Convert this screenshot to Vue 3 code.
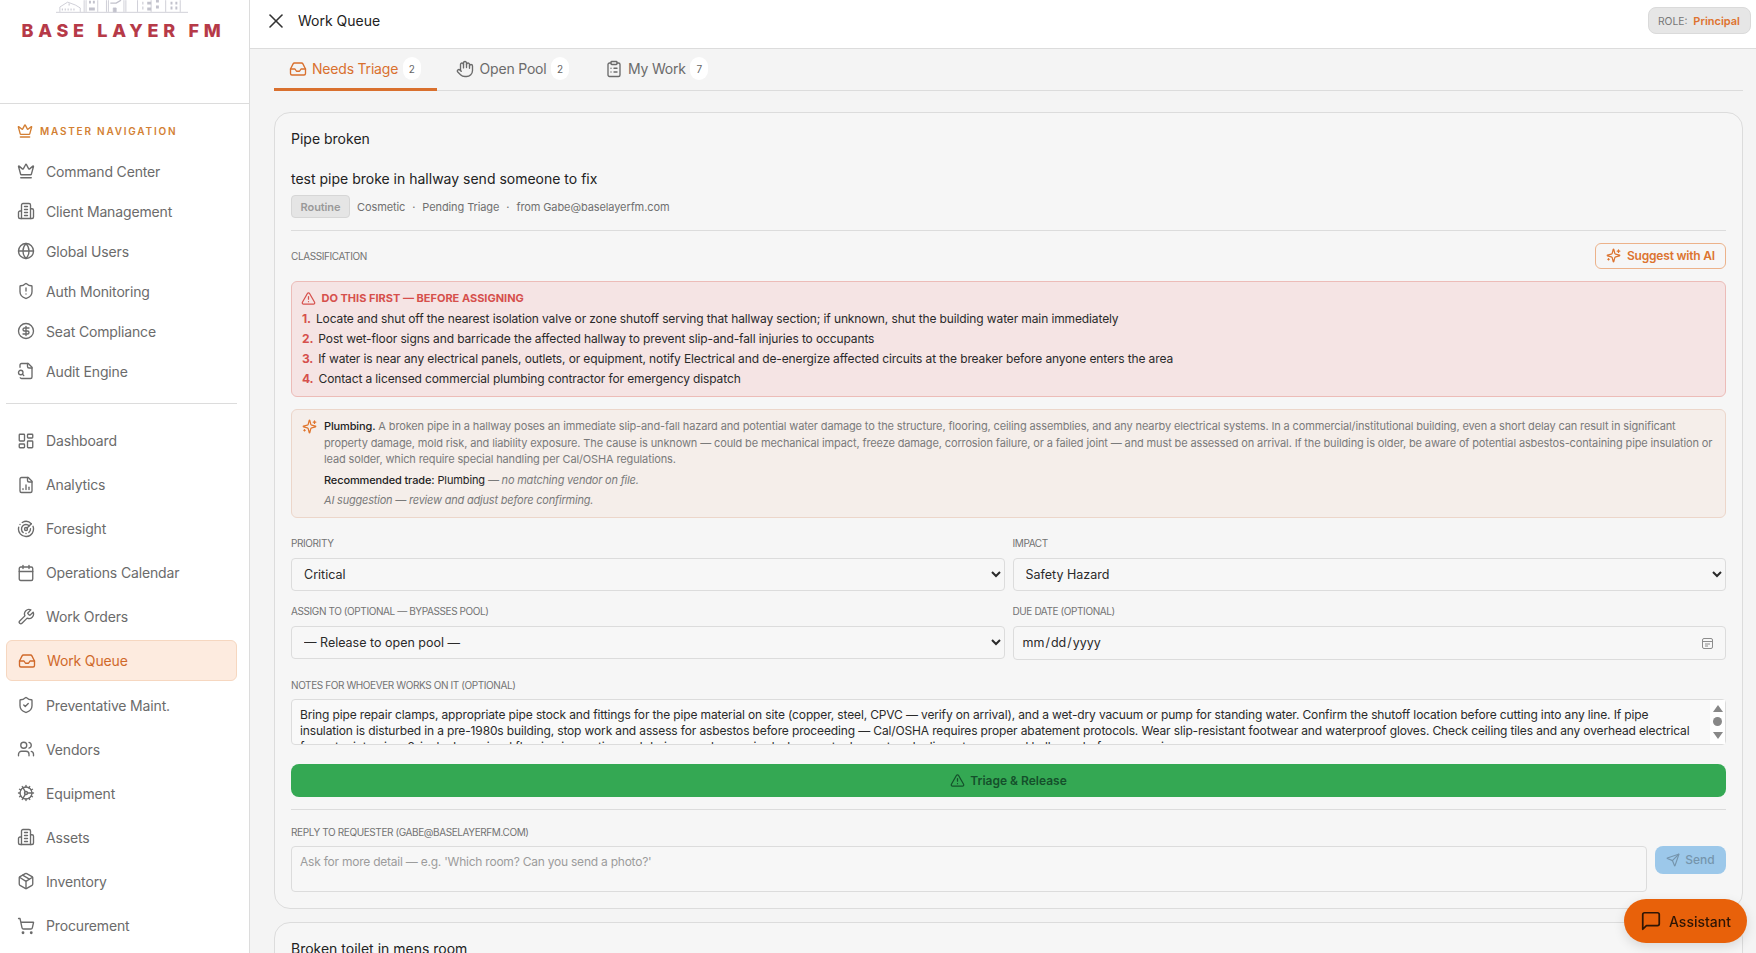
<script setup>
import { h, ref } from 'vue'

const c = (x, y, r) => `M${x - r} ${y}a${r} ${r} 0 1 0 ${2 * r} 0a${r} ${r} 0 1 0 ${-2 * r} 0`
const rr = (x, y, w, hh, r) =>
  `M${x + r} ${y}h${w - 2 * r}a${r} ${r} 0 0 1 ${r} ${r}v${hh - 2 * r}a${r} ${r} 0 0 1 ${-r} ${r}h${-(w - 2 * r)}a${r} ${r} 0 0 1 ${-r} ${-r}v${-(hh - 2 * r)}a${r} ${r} 0 0 1 ${r} ${-r}z`

const shield = 'M20 13c0 5-3.5 7.5-7.66 8.95a1 1 0 0 1-.67-.01C7.5 20.5 4 18 4 13V6a1 1 0 0 1 1-1c2 0 4.5-1.2 6.24-2.72a1.17 1.17 0 0 1 1.52 0C14.51 3.81 17 5 19 5a1 1 0 0 1 1 1z'
const building = ['M6 22V4a2 2 0 0 1 2-2h8a2 2 0 0 1 2 2v18Z', 'M6 12H4a2 2 0 0 0-2 2v6a2 2 0 0 0 2 2h2', 'M18 9h2a2 2 0 0 1 2 2v9a2 2 0 0 1-2 2h-2', 'M10 6h4', 'M10 10h4', 'M10 14h4', 'M10 18h4']
const icons = {
  crown: ['M11.562 3.266a.5.5 0 0 1 .876 0L15.39 8.87a1 1 0 0 0 1.516.294L21.183 5.5a.5.5 0 0 1 .798.519l-2.834 10.246a1 1 0 0 1-.956.734H5.81a1 1 0 0 1-.957-.734L2.02 6.02a.5.5 0 0 1 .798-.519l4.276 3.664a1 1 0 0 0 1.516-.294z', 'M5 21h14'],
  building,
  globe: [c(12, 12, 10), 'M12 2a14.5 14.5 0 0 0 0 20 14.5 14.5 0 0 0 0-20', 'M2 12h20'],
  shieldAlert: [shield, 'M12 8v4', 'M12 16h.01'],
  dollar: [c(12, 12, 10), 'M16 8h-6a2 2 0 1 0 0 4h4a2 2 0 1 1 0 4H8', 'M12 18V6'],
  fileSearch: ['M14 2v4a2 2 0 0 0 2 2h4', 'M4.268 21a2 2 0 0 0 1.727 1H18a2 2 0 0 0 2-2V7l-5-5H6a2 2 0 0 0-2 2v3', 'm9 18-1.5-1.5', c(5, 14, 3)],
  dashboard: [rr(3, 3, 7, 9, 1), rr(14, 3, 7, 5, 1), rr(14, 12, 7, 9, 1), rr(3, 16, 7, 5, 1)],
  fileChart: ['M15 2H6a2 2 0 0 0-2 2v16a2 2 0 0 0 2 2h12a2 2 0 0 0 2-2V7Z', 'M14 2v4a2 2 0 0 0 2 2h4', 'M8 18v-1', 'M12 18v-6', 'M16 18v-3'],
  radar: ['M19.07 4.93A10 10 0 0 0 6.99 3.34', 'M4 6h.01', 'M2.29 9.62A10 10 0 1 0 21.31 8.35', 'M16.24 7.76A6 6 0 1 0 8.23 16.67', 'M12 18h.01', 'M17.99 11.66A6 6 0 0 1 15.77 16.67', c(12, 12, 2), 'm13.41 10.59 5.66-5.66'],
  calendar: ['M8 2v4', 'M16 2v4', rr(3, 4, 18, 18, 2), 'M3 10h18'],
  wrench: ['M14.7 6.3a1 1 0 0 0 0 1.4l1.6 1.6a1 1 0 0 0 1.4 0l3.77-3.77a6 6 0 0 1-7.94 7.94l-6.91 6.91a2.12 2.12 0 0 1-3-3l6.91-6.91a6 6 0 0 1 7.94-7.94l-3.76 3.76z'],
  inbox: ['M22 12h-6l-2 3h-4l-2-3H2', 'M5.45 5.11 2 12v6a2 2 0 0 0 2 2h16a2 2 0 0 0 2-2v-6l-3.45-6.89A2 2 0 0 0 16.76 4H7.24a2 2 0 0 0-1.79 1.11z'],
  shieldCheck: [shield, 'm9 12 2 2 4-4'],
  users: ['M16 21v-2a4 4 0 0 0-4-4H6a4 4 0 0 0-4 4v2', c(9, 7, 4), 'M22 21v-2a4 4 0 0 0-3-3.87', 'M16 3.13a4 4 0 0 1 0 7.75'],
  cog: ['M12 20a8 8 0 1 0 0-16 8 8 0 0 0 0 16Z', 'M12 14a2 2 0 1 0 0-4 2 2 0 0 0 0 4Z', 'M12 2v2', 'M12 22v-2', 'm17 20.66-1-1.73', 'M11 10.27 7 3.34', 'm20.66 17-1.73-1', 'm3.34 7 1.73 1', 'M14 12h8', 'M2 12h2', 'm20.66 7-1.73 1', 'm3.34 17 1.73-1', 'm17 3.34-1 1.73', 'm11 13.73-4 6.93'],
  package: ['M11 21.73a2 2 0 0 0 2 0l7-4A2 2 0 0 0 21 16V8a2 2 0 0 0-1-1.73l-7-4a2 2 0 0 0-2 0l-7 4A2 2 0 0 0 3 8v8a2 2 0 0 0 1 1.73z', 'M12 22V12', 'm3.3 7 7.703 4.734a2 2 0 0 0 1.994 0L20.7 7', 'm7.5 4.27 9 5.15'],
  cart: [c(8, 21, 1), c(19, 21, 1), 'M2.05 2.05h2l2.66 12.42a2 2 0 0 0 2 1.58h9.78a2 2 0 0 0 1.95-1.57l1.65-7.43H5.12'],
  hand: ['M18 11V6a2 2 0 0 0-2-2a2 2 0 0 0-2 2', 'M14 10V4a2 2 0 0 0-2-2a2 2 0 0 0-2 2v2', 'M10 10.5V6a2 2 0 0 0-2-2a2 2 0 0 0-2 2v8', 'M18 8a2 2 0 1 1 4 0v6a8 8 0 0 1-8 8h-2c-2.8 0-4.5-.86-5.99-2.34l-3.6-3.6a2 2 0 0 1 2.83-2.82L7 15'],
  clipboard: [rr(8, 2, 8, 4, 1), 'M16 4h2a2 2 0 0 1 2 2v14a2 2 0 0 1-2 2H6a2 2 0 0 1-2-2V6a2 2 0 0 1 2-2h2', 'M12 11h4', 'M12 16h4', 'M8 11h.01', 'M8 16h.01'],
  alert: ['m21.73 18-8-14a2 2 0 0 0-3.48 0l-8 14A2 2 0 0 0 4 21h16a2 2 0 0 0 1.73-3', 'M12 9v4', 'M12 17h.01'],
  sparkles: ['M9.937 15.5A2 2 0 0 0 8.5 14.063l-6.135-1.582a.5.5 0 0 1 0-.962L8.5 9.936A2 2 0 0 0 9.937 8.5l1.582-6.135a.5.5 0 0 1 .963 0L14.063 8.5A2 2 0 0 0 15.5 9.937l6.135 1.581a.5.5 0 0 1 0 .964L15.5 14.063a2 2 0 0 0-1.437 1.437l-1.582 6.135a.5.5 0 0 1-.963 0z', 'M20 3v4', 'M22 5h-4', 'M4 17v2', 'M5 18H3'],
  send: ['M14.536 21.686a.5.5 0 0 0 .937-.024l6.5-19a.496.496 0 0 0-.635-.635l-19 6.5a.5.5 0 0 0-.024.937l7.93 3.18a2 2 0 0 1 1.112 1.11z', 'm21.854 2.147-10.94 10.939'],
  message: ['M21 15a2 2 0 0 1-2 2H7l-4 4V5a2 2 0 0 1 2-2h14a2 2 0 0 1 2 2z'],
  x: ['M18 6 6 18', 'm6 6 12 12']
}

const Icon = (props) =>
  h('svg', {
    width: props.size || 16, height: props.size || 16, viewBox: '0 0 24 24', fill: 'none',
    stroke: 'currentColor', 'stroke-width': props.sw || 2, 'stroke-linecap': 'round', 'stroke-linejoin': 'round',
    style: 'flex:none;display:block'
  }, (icons[props.name] || []).map((d) => h('path', { d })))
Icon.props = ['name', 'size', 'sw']

const masterNav = [
  ['crown', 'Command Center'], ['building', 'Client Management'], ['globe', 'Global Users'],
  ['shieldAlert', 'Auth Monitoring'], ['dollar', 'Seat Compliance'], ['fileSearch', 'Audit Engine']
].map(([icon, label]) => ({ icon, label }))

const mainNav = [
  ['dashboard', 'Dashboard'], ['fileChart', 'Analytics'], ['radar', 'Foresight'], ['calendar', 'Operations Calendar'],
  ['wrench', 'Work Orders'], ['inbox', 'Work Queue', true], ['shieldCheck', 'Preventative Maint.'], ['users', 'Vendors'],
  ['cog', 'Equipment'], ['building', 'Assets'], ['package', 'Inventory'], ['cart', 'Procurement']
].map(([icon, label, active]) => ({ icon, label, active }))

const tabs = [
  { icon: 'inbox', label: 'Needs Triage', count: 2, active: true },
  { icon: 'hand', label: 'Open Pool', count: 2 },
  { icon: 'clipboard', label: 'My Work', count: 7 }
]

const steps = [
  'Locate and shut off the nearest isolation valve or zone shutoff serving that hallway section; if unknown, shut the building water main immediately',
  'Post wet-floor signs and barricade the affected hallway to prevent slip-and-fall injuries to occupants',
  'If water is near any electrical panels, outlets, or equipment, notify Electrical and de-energize affected circuits at the breaker before anyone enters the area',
  'Contact a licensed commercial plumbing contractor for emergency dispatch'
]

const notes = ref('Bring pipe repair clamps, appropriate pipe stock and fittings for the pipe material on site (copper, steel, CPVC — verify on arrival), and a wet-dry vacuum or pump for standing water. Confirm the shutoff location before cutting into any line. If pipe insulation is disturbed in a pre-1980s building, stop work and assess for asbestos before proceeding — Cal/OSHA requires proper abatement protocols. Wear slip-resistant footwear and waterproof gloves. Check ceiling tiles and any overhead electrical for water intrusion; 2-inch-deep visual flooring inspection and drying may be required where water has entered adjacent rooms and hallways before reopening.')
</script>

<template>
  <div class="app">
    <aside class="sidebar">
      <div class="brand">
        <svg class="skyline" width="132" height="13" viewBox="0 0 136 13" fill="none" stroke="#c2c2cc" stroke-width="0.8">
          <path d="M0 12.5h136" />
          <path d="M4 12V7l8-5 8 3 5 3v4" />
          <path d="M6 9.5h1M9 9.5h1M12 9.5h1M15 9.5h1M18 9.5h1" stroke-width="2" />
          <path d="M13 4.5h1" stroke-width="2" />
          <path d="M29 12V0M31 12V0M43 12V0" />
          <path d="M34 2h2M38 2h2M34 9h6" stroke-width="3" />
          <path d="M52 12V0M54 12V0M70 12V0M72 12V0" />
          <path d="M56 3h6l5-3" stroke-width="1.4" />
          <path d="M59 8h3v4h-3z" fill="#c2c2cc" />
          <path d="M84 12V0M98 12V0M113 12V0M128 12V0" />
          <path d="M89 3h1M89 8h1M94 9h4M94 3h4M103 1h3M103 7h3M118 3h2M123 3h2M118 8h2M123 8h2" stroke-width="3" />
        </svg>
        <div class="brand-name">BASE LAYER FM</div>
      </div>
      <nav class="nav">
        <div class="nav-head"><Icon name="crown" :size="16" />MASTER NAVIGATION</div>
        <a v-for="item in masterNav" :key="item.label" class="nav-item master">
          <Icon :name="item.icon" :size="18" :sw="1.8" />{{ item.label }}
        </a>
        <hr class="nav-rule" />
        <a v-for="item in mainNav" :key="item.label" class="nav-item" :class="{ active: item.active }">
          <Icon :name="item.icon" :size="18" :sw="1.8" />{{ item.label }}
        </a>
      </nav>
    </aside>

    <div class="main">
      <header class="topbar">
        <div class="top-left">
          <Icon name="x" :size="24" :sw="1.6" />
          <span class="top-title">Work Queue</span>
        </div>
        <div class="role"><span>ROLE:</span><b>Principal</b></div>
      </header>

      <div class="content">
        <div class="tabs">
          <button v-for="t in tabs" :key="t.label" class="tab" :class="{ active: t.active }">
            <Icon :name="t.icon" :size="18" :sw="1.8" />
            <span>{{ t.label }}</span>
            <span class="count">{{ t.count }}</span>
          </button>
        </div>

        <section class="card">
          <h3 class="card-title">Pipe broken</h3>
          <p class="desc">test pipe broke in hallway send someone to fix</p>
          <div class="meta">
            <span class="badge">Routine</span>
            <span>Cosmetic</span><span class="dot">·</span><span>Pending Triage</span><span class="dot">·</span><span>from Gabe@baselayerfm.com</span>
          </div>
          <div class="rule"></div>

          <div class="class-row">
            <span class="label">Classification</span>
            <button class="ai-btn"><Icon name="sparkles" :size="15" />Suggest with AI</button>
          </div>

          <div class="first-box">
            <div class="first-title"><Icon name="alert" :size="15" />DO THIS FIRST — BEFORE ASSIGNING</div>
            <div v-for="(s, i) in steps" :key="i" class="step"><b>{{ i + 1 }}.</b>{{ s }}</div>
          </div>

          <div class="ai-box">
            <Icon name="sparkles" :size="15" class="ai-icon" />
            <div class="ai-body">
              <p class="ai-para"><b>Plumbing.</b> A broken pipe in a hallway poses an immediate slip-and-fall hazard and potential water damage to the structure, flooring, ceiling assemblies, and any nearby electrical systems. In a commercial/institutional building, even a short delay can result in significant property damage, mold risk, and liability exposure. The cause is unknown — could be mechanical impact, freeze damage, corrosion failure, or a failed joint — and must be assessed on arrival. If the building is older, be aware of potential asbestos-containing pipe insulation or lead solder, which require special handling per Cal/OSHA regulations.</p>
              <p class="ai-trade"><b>Recommended trade:</b> Plumbing <i>— no matching vendor on file.</i></p>
              <p class="ai-note">AI suggestion — review and adjust before confirming.</p>
            </div>
          </div>

          <div class="form-grid">
            <label class="field">
              <span class="label">Priority</span>
              <select class="input sel"><option>Critical</option></select>
            </label>
            <label class="field">
              <span class="label">Impact</span>
              <select class="input sel"><option>Safety Hazard</option></select>
            </label>
            <label class="field">
              <span class="label">Assign to (optional — bypasses pool)</span>
              <select class="input sel"><option>— Release to open pool —</option></select>
            </label>
            <label class="field">
              <span class="label">Due date (optional)</span>
              <span class="date-wrap">
                <input class="input date" type="date" />
                <svg class="date-icon" width="13" height="13" viewBox="0 0 13 13" fill="none" stroke="#8c8c8c" stroke-width="1">
                  <rect x="1.5" y="1.5" width="10" height="10" rx="1.5" />
                  <path d="M1.5 4.5h10M4 7h5M4 9h3" />
                </svg>
              </span>
            </label>
          </div>

          <div class="notes-field">
            <span class="label">Notes for whoever works on it (optional)</span>
            <div class="notes-wrap">
              <textarea class="notes" v-model="notes"></textarea>
              <div class="fake-scroll"><i class="up"></i><i class="thumb"></i><i class="down"></i></div>
            </div>
          </div>

          <button class="release"><Icon name="alert" :size="15" />Triage &amp; Release</button>
          <div class="rule"></div>

          <span class="label reply-label">Reply to requester (gabe@baselayerfm.com)</span>
          <div class="reply-row">
            <textarea class="reply" placeholder="Ask for more detail — e.g. 'Which room? Can you send a photo?'"></textarea>
            <button class="send"><Icon name="send" :size="14" />Send</button>
          </div>
        </section>

        <section class="card">
          <h3 class="card-title">Broken toilet in mens room</h3>
        </section>
      </div>
    </div>

    <button class="assistant"><Icon name="message" :size="22" :sw="1.9" />Assistant</button>
  </div>
</template>

<style>
html, body { margin: 0; background: #f4f4f4; }
</style>

<style scoped>
.app {
  display: flex;
  height: 100vh;
  overflow: hidden;
  font-family: Inter, "Liberation Sans", sans-serif;
  color: #222;
  background: #f4f4f4;
}
.sidebar {
  width: 250px;
  flex: none;
  box-sizing: border-box;
  background: #fff;
  border-right: 1px solid #dcdcdc;
  overflow: hidden;
}
.brand {
  height: 104px;
  box-sizing: border-box;
  border-bottom: 1px solid #dcdcdc;
  display: flex;
  flex-direction: column;
  align-items: center;
}
.skyline { display: block; margin-left: -5px; }
.brand-name {
  margin-top: 10px;
  margin-right: 2px;
  font: 800 18px/16px Inter, sans-serif;
  letter-spacing: 4.7px;
  color: #b63a48;
  white-space: nowrap;
}
.nav { padding: 19px 12px 0 6px; }
.nav-head {
  display: flex;
  align-items: center;
  gap: 7px;
  height: 16px;
  padding-left: 11px;
  margin-bottom: 12px;
  font-size: 10px;
  font-weight: 600;
  letter-spacing: 0.178em;
  color: #d37f33;
}
.nav-item {
  display: flex;
  align-items: center;
  gap: 11px;
  height: 41px;
  margin-bottom: 3.1px;
  padding-left: 10px;
  box-sizing: border-box;
  font-size: 14px;
  letter-spacing: -0.15px;
  color: #6b6b6b;
  border: 1px solid transparent;
  border-radius: 6px;
}
.nav-item.master { height: 40px; margin-bottom: 0; }
.nav-item.active {
  padding-left: 11px;
  background: #fdebdf;
  border-color: #f6d7c0;
  color: #d0692a;
}
.nav-rule { border: 0; border-top: 1px solid #dcdcdc; margin: 12px 0 16px; }

.main { flex: 1; min-width: 0; display: flex; flex-direction: column; }
.topbar {
  height: 49px;
  flex: none;
  box-sizing: border-box;
  background: #fff;
  border-bottom: 1px solid #dcdcdc;
  display: flex;
  align-items: center;
  justify-content: space-between;
  padding: 0 5px 7px 14px;
}
.top-left { display: flex; align-items: center; gap: 10px; color: #333; }
.top-title { font-size: 14px; font-weight: 400; color: #222; }
.role {
  display: flex;
  align-items: center;
  gap: 6px;
  height: 27px;
  padding: 0 10px 0 9px;
  box-sizing: border-box;
  background: #e6e6e6;
  border: 1px solid #dadada;
  border-radius: 8px;
  font-size: 10.3px;
  color: #777;
}
.role b { font-size: 11px; font-weight: 600; color: #de7330; }

.content { flex: 1; min-height: 0; padding: 0 13px 0 24px; overflow: hidden; }
.tabs {
  display: flex;
  gap: 5px;
  height: 42px;
  box-sizing: border-box;
  border-bottom: 1px solid #dcdcdc;
}
.tab {
  display: flex;
  align-items: center;
  gap: 5.5px;
  height: 42px;
  padding: 0 16px 0 14.5px;
  border: 0;
  border-bottom: 3px solid transparent;
  box-sizing: border-box;
  background: none;
  font: 14px Inter, sans-serif;
  letter-spacing: -0.2px;
  color: #6b6b6b;
}
.tab.active { color: #d9702e; border-bottom-color: #d9702e; }
.count {
  width: 18px;
  height: 23px;
  margin-left: -1px;
  border-radius: 9px;
  background: #fff;
  display: flex;
  align-items: center;
  justify-content: center;
  font-size: 10px;
  color: #666;
}

.card {
  margin-top: 21px;
  padding: 16px;
  background: #f6f6f6;
  border: 1px solid #dcdcdc;
  border-radius: 16px;
}
.card + .card { margin-top: 13px; }
.card-title { margin: 0; font-size: 14px; line-height: 20px; font-weight: 400; color: #222; }
.desc { margin: 20px 0 0; font-size: 14px; line-height: 20px; font-weight: 400; color: #222; }
.meta {
  display: flex;
  align-items: center;
  gap: 7px;
  margin-top: 6px;
  font-size: 11px;
  letter-spacing: -0.1px;
  color: #707070;
}
.badge {
  height: 23px;
  width: 59px;
  box-sizing: border-box;
  display: flex;
  align-items: center;
  justify-content: center;
  background: #e5e5e5;
  border: 1px solid #d6d6d6;
  border-radius: 4px;
  font-weight: 600;
  color: #999;
}
.rule { height: 1px; background: #dcdcdc; margin-top: 12px; }
.label {
  display: block;
  font-size: 10px;
  line-height: 14px;
  text-transform: uppercase;
  letter-spacing: -0.4px;
  color: #737373;
}
.class-row {
  display: flex;
  align-items: center;
  justify-content: space-between;
  height: 26px;
  margin-top: 12px;
}
.ai-btn {
  display: flex;
  align-items: center;
  justify-content: center;
  gap: 6px;
  width: 131px;
  height: 26px;
  padding: 0 0 1px;
  box-sizing: border-box;
  background: transparent;
  border: 1px solid #ecb28a;
  border-radius: 6px;
  font: 600 12px Inter, sans-serif;
  letter-spacing: -0.2px;
  white-space: nowrap;
  color: #dc7430;
}
.first-box {
  margin-top: 12px;
  padding: 6px 9px 7px 10px;
  background: #f5e4e4;
  border: 1px solid #ecbcb8;
  border-radius: 6px;
}
.first-title {
  display: flex;
  align-items: center;
  gap: 5.5px;
  height: 20px;
  margin-bottom: 1px;
  margin-left: -1px;
  font-size: 11px;
  font-weight: 700;
  color: #d6504c;
}
.step { font-size: 12px; line-height: 20px; letter-spacing: -0.12px; color: #2a2a2a; white-space: nowrap; }
.step b { color: #d6504c; font-weight: 700; margin-right: 5px; }
.ai-box {
  display: flex;
  gap: 7px;
  margin-top: 12px;
  padding: 8px 7px 8px 10px;
  background: #f5eeea;
  border: 1px solid #ecd6ca;
  border-radius: 6px;
}
.ai-icon { color: #e0762f; margin-top: 1px; }
.ai-body { flex: 1; min-width: 0; font-size: 11px; line-height: 16.6px; letter-spacing: -0.13px; color: #7a7a7a; }
.ai-body p { margin: 0; }
.ai-para b { font-weight: 500; color: #222; }
.ai-trade { margin-top: 4.5px !important; color: #222; }
.ai-trade b { font-weight: 500; }
.ai-trade i { color: #7a7a7a; letter-spacing: -0.2px; }
.ai-note { margin-top: 3.5px !important; font-style: italic; letter-spacing: -0.2px; }

.form-grid {
  display: grid;
  grid-template-columns: 1fr 1fr;
  column-gap: 8px;
  row-gap: 13.5px;
  margin-top: 18.5px;
}
.field { display: flex; flex-direction: column; gap: 7.5px; min-width: 0; align-items: stretch; }
.input {
  box-sizing: border-box;
  height: 33px;
  width: 100%;
  padding: 0 8px;
  background: #f7f7f7;
  border: 1px solid #dcdcdc;
  border-radius: 4px;
  font: 12.5px Inter, sans-serif;
  color: #2a2a2a;
}
.date-wrap { position: relative; display: block; }
.date { display: block; height: 34px; }
.date::-webkit-calendar-picker-indicator { opacity: 0; }
.date-icon { position: absolute; right: 12px; top: 11px; pointer-events: none; }
.notes-field { margin-top: 18px; }
.notes-wrap { position: relative; margin-top: 7px; }
.notes {
  display: block;
  box-sizing: border-box;
  width: 100%;
  height: 46px;
  padding: 7px 22px 0 8px;
  background: #f9f9f9;
  border: 1px solid #dcdcdc;
  border-radius: 4px;
  font: 12px/16px Inter, sans-serif;
  letter-spacing: -0.14px;
  color: #2a2a2a;
  overflow: hidden;
  resize: none;
  outline: none;
}
.fake-scroll {
  position: absolute;
  top: 1px;
  right: 1px;
  bottom: 1px;
  width: 15px;
  background: #fff;
  display: flex;
  flex-direction: column;
  align-items: center;
  justify-content: center;
  gap: 5.5px;
}
.fake-scroll i { display: block; }
.up { border: 5px solid transparent; border-top: 0; border-bottom: 7px solid #888; }
.down { border: 5px solid transparent; border-bottom: 0; border-top: 7px solid #888; }
.thumb { width: 9px; height: 9px; border-radius: 50%; background: #888; }
.release {
  display: flex;
  align-items: center;
  justify-content: center;
  gap: 5px;
  width: 100%;
  height: 33px;
  margin-top: 19px;
  background: #34a853;
  border: 0;
  border-radius: 8px;
  font: 600 12px Inter, sans-serif;
  color: #14502b;
}
.reply-label { margin-top: 15px; }
.reply-row { display: flex; gap: 8px; margin-top: 7px; }
.reply {
  flex: 1;
  box-sizing: border-box;
  height: 46px;
  padding: 7px 8px;
  background: #f7f7f7;
  border: 1px solid #dcdcdc;
  border-radius: 4px;
  font: 12px/16px Inter, sans-serif;
  letter-spacing: -0.23px;
  resize: none;
  outline: none;
}
.reply::placeholder { color: #9c9c9c; }
.send {
  display: flex;
  align-items: center;
  justify-content: center;
  gap: 5px;
  width: 71px;
  height: 28px;
  flex: none;
  background: #9cc8ea;
  border: 0;
  border-radius: 8px;
  font: 500 12px Inter, sans-serif;
  color: #7595ad;
}
.assistant {
  position: fixed;
  right: 9px;
  bottom: 10px;
  display: flex;
  align-items: center;
  justify-content: center;
  gap: 7px;
  width: 123px;
  height: 44px;
  padding: 0;
  background: #e8610a;
  border: 0;
  border-radius: 22px;
  box-shadow: 0 4px 12px rgba(0, 0, 0, 0.12);
  font: 500 14px Inter, sans-serif;
  color: #2e1505;
}
</style>
